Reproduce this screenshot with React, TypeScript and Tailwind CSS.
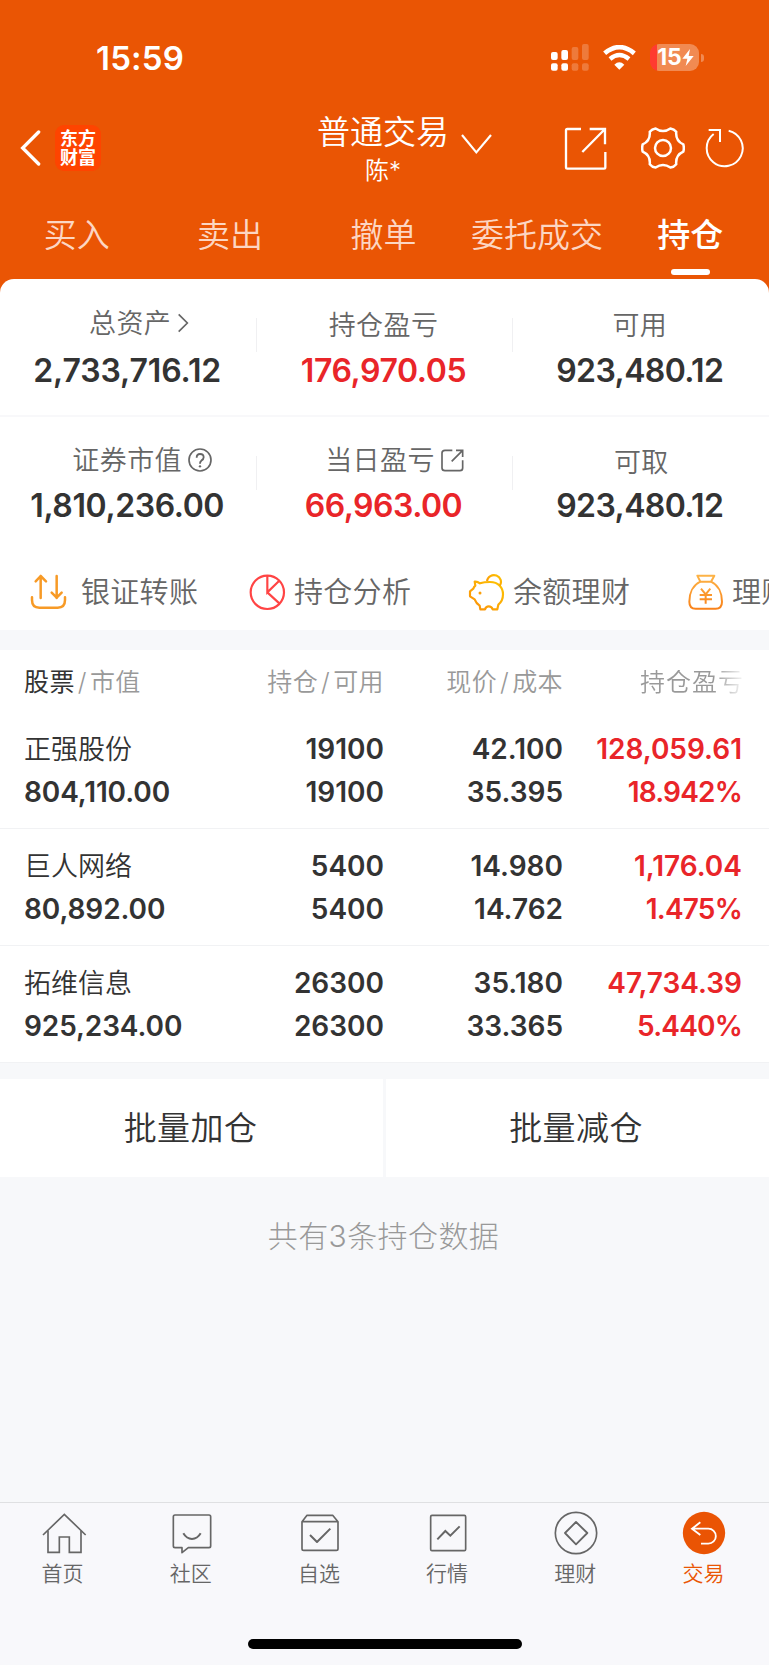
import React from "react";

interface Holding {
  name: string;
  marketValue: string;
  amount: string;
  available: string;
  price: string;
  cost: string;
  profit: string;
  profitRate: string;
}

const holdings: Holding[] = [
  {
    name: "正强股份",
    marketValue: "804,110.00",
    amount: "19100",
    available: "19100",
    price: "42.100",
    cost: "35.395",
    profit: "128,059.61",
    profitRate: "18.942%",
  },
  {
    name: "巨人网络",
    marketValue: "80,892.00",
    amount: "5400",
    available: "5400",
    price: "14.980",
    cost: "14.762",
    profit: "1,176.04",
    profitRate: "1.475%",
  },
  {
    name: "拓维信息",
    marketValue: "925,234.00",
    amount: "26300",
    available: "26300",
    price: "35.180",
    cost: "33.365",
    profit: "47,734.39",
    profitRate: "5.440%",
  },
];

const tabs = ["买入", "卖出", "撤单", "委托成交", "持仓"];

const SignalIcon = () => (
  <svg width="38" height="27" viewBox="0 0 114 81" fill="#fff">
    <rect x="0" y="24" width="20" height="24" rx="6" />
    <rect x="31" y="18" width="20" height="30" rx="6" />
    <rect x="0" y="58" width="20" height="22" rx="6" />
    <rect x="31" y="58" width="20" height="22" rx="6" />
    <g opacity="0.22">
      <rect x="62" y="9" width="20" height="39" rx="6" />
      <rect x="93" y="0" width="20" height="48" rx="6" />
      <rect x="62" y="58" width="20" height="22" rx="6" />
      <rect x="93" y="58" width="20" height="22" rx="6" />
    </g>
  </svg>
);

const WifiIcon = () => (
  <svg width="33" height="25" viewBox="0 0 99 75" fill="none" stroke="#fff">
    <path d="M5 25 Q49 -12 94 25" strokeWidth="14" />
    <path d="M21 42 Q49 18 78 42" strokeWidth="13" />
    <path d="M34 59 Q49 45 64 59 L49 74Z" fill="#fff" stroke="none" />
  </svg>
);

const BatteryIcon = () => (
  <div className="flex items-center">
    <div className="flex h-[27px] w-[49px] items-center justify-center overflow-hidden rounded-[9px] bg-[linear-gradient(90deg,#ff3b30_0_7px,#f18a52_7px)] pl-[2px]">
      <span className="text-[23px] leading-none font-bold">15</span>
      <svg width="12" height="17" viewBox="0 0 36 51" fill="#fff">
        <path d="M24 0 L1 29 H16 L11 51 L35 21 H20Z" />
      </svg>
    </div>
    <div className="ml-[2px] h-[8px] w-[3px] rounded-r-full bg-[#f18a52]" />
  </div>
);

const ShareIcon = () => (
  <svg width="43" height="43" viewBox="0 0 129 129" fill="none" stroke="#fff" strokeWidth="7">
    <path d="M51 6 H10 Q6 6 6 10 V121 Q6 125 10 125 H120 Q124 125 124 121 V75" />
    <path d="M77 6 H123 V52 M123 6 L55 75" />
  </svg>
);

const GearIcon = () => (
  <svg
    width="44"
    height="44"
    viewBox="-66 -66 132 132"
    fill="none"
    stroke="#fff"
    strokeWidth="7.5"
    strokeLinejoin="round"
  >
    <path d="M61 -11 Q64 0 61 11 C45 18 38 30 39.7 48.7 Q33 57.2 22.3 58.7 C7 48 -7 48 -22.3 58.7 Q-33 57.2 -39.7 48.7 C-38 30 -45 18 -61 11 Q-64 0 -61 -11 C-45 -18 -38 -30 -39.7 -48.7 Q-33 -57.2 -22.3 -58.7 C-7 -48 7 -48 22.3 -58.7 Q33 -57.2 39.7 -48.7 C38 -30 45 -18 61 -11Z" />
    <circle r="24" />
  </svg>
);

const RefreshIcon = () => (
  <svg width="40" height="40" viewBox="0 0 120 120" fill="none" stroke="#fff" strokeWidth="6">
    <path d="M71 8 A54 54 0 1 1 26 18" />
    <path d="M11 6 H45 V42" />
  </svg>
);

const ArrowRightIcon = () => (
  <svg width="12" height="20" viewBox="0 0 36 60" fill="none" stroke="#666" strokeWidth="5">
    <path d="M5 4 L31 30 L5 56" />
  </svg>
);

const QuestionIcon = () => (
  <svg width="24" height="24" viewBox="0 0 72 72" fill="none" stroke="#666" strokeWidth="5">
    <circle cx="36" cy="36" r="33" />
    <path d="M26 29 Q26 18 36 18 Q47 18 47 28 Q47 34 40 38 Q36 41 36 47" strokeWidth="5.5" />
    <circle cx="36" cy="55" r="3.5" fill="#666" stroke="none" />
  </svg>
);

const OpenIcon = () => (
  <svg width="23" height="23" viewBox="0 0 69 69" fill="none" stroke="#666" strokeWidth="5">
    <path d="M34 4 H12 Q3 4 3 12 V57 Q3 65 12 65 H57 Q65 65 65 57 V34" />
    <path d="M45 4 H65 V24 M65 4 L32 37" />
  </svg>
);

const TransferIcon = () => (
  <svg
    width="37"
    height="37"
    viewBox="0 0 111 111"
    fill="none"
    stroke="#f79a26"
    strokeWidth="7.5"
    strokeLinecap="round"
    strokeLinejoin="round"
  >
    <path d="M32 72 V6 M17 22 L32 6 L48 22" />
    <path d="M80 6 V72 M65 56 L80 71 L95 56" />
    <path d="M6 70 V78 Q6 101 28 101 H83 Q105 101 105 78 V70" />
  </svg>
);

const PieIcon = () => (
  <svg width="37" height="37" viewBox="0 0 111 111" fill="none" stroke="#ff4444" strokeWidth="6.5">
    <circle cx="55" cy="55" r="50" />
    <path d="M55 5 V55 L90 21 M55 55 L91 88" />
  </svg>
);

const PiggyIcon = () => (
  <svg
    width="37"
    height="37"
    viewBox="250 99 111 111"
    fill="none"
    stroke="url(#piggy)"
    strokeWidth="6.5"
    strokeLinejoin="round"
  >
    <defs>
      <linearGradient id="piggy" x1="0" y1="1" x2="1" y2="0">
        <stop offset="0" stopColor="#fb8f0a" />
        <stop offset="1" stopColor="#fdc400" />
      </linearGradient>
    </defs>
    <path d="M270 122 Q278 121 286 127 Q298 123 316 123 C342 123 355 140 355 160 Q355 180 341 191 L338 205 H324 Q321 196 312 196 Q304 196 301 205 H287 L285 194 Q275 188 270 175 L256 166 V151 L266 143 Q267 138 272 134Z" />
    <path d="M307 120 A21 20 0 1 1 345 134" />
    <circle cx="286" cy="156" r="4.5" fill="#fb9f0a" stroke="none" />
  </svg>
);

const MoneyBagIcon = () => (
  <svg
    width="37"
    height="37"
    viewBox="908 99 111 111"
    fill="none"
    stroke="url(#bag)"
    strokeWidth="6"
    strokeLinejoin="round"
  >
    <defs>
      <linearGradient id="bag" gradientUnits="userSpaceOnUse" x1="960" y1="100" x2="960" y2="206">
        <stop offset="0" stopColor="#fdb548" />
        <stop offset="1" stopColor="#f98118" />
      </linearGradient>
    </defs>
    <path d="M939 104 H990 L980 122 H948Z" />
    <path d="M948 122 C926 132 915 156 915 182 Q915 203 934 203 H994 Q1013 203 1013 182 C1013 156 1002 132 980 122" />
    <path d="M950 143 L964 160 L978 143 M964 160 V188 M946 162 H983 M946 175 H983" />
  </svg>
);

const navStroke = {
  width: 46,
  height: 44,
  fill: "none",
  stroke: "#666",
  strokeWidth: 5,
} as const;

const HomeIcon = () => (
  <svg {...navStroke} viewBox="123 94 138 132">
    <path d="M129 166 L193 104 L257 166" />
    <path d="M144 153 V218 H178 V172 H208 V218 H243 V153" />
  </svg>
);

const ChatIcon = () => (
  <svg {...navStroke} viewBox="508 94 138 132" strokeLinejoin="round">
    <path d="M526 106 H628 Q633 106 633 111 V199 Q633 204 628 204 H566 L547 219 V204 H526 Q521 204 521 199 V111 Q521 106 526 106Z" />
    <path d="M551 161 Q561 178 577 178 Q593 178 603 161" strokeWidth="6" />
  </svg>
);

const WatchIcon = () => (
  <svg {...navStroke} viewBox="891 94 138 132" strokeLinejoin="round">
    <path d="M906 126 L921 107 H998 L1014 126 V207 Q1014 212 1009 212 H911 Q906 212 906 207Z M906 126 H1014" />
    <path d="M930 166 L951 187 L991 147" strokeWidth="6" />
  </svg>
);

const MarketIcon = () => (
  <svg {...navStroke} viewBox="120 94 138 132">
    <rect x="137" y="107" width="105" height="106" rx="4" />
    <path d="M157 179 L181 154 L196 168 L224 140" strokeWidth="6" />
  </svg>
);

const WealthIcon = () => (
  <svg {...navStroke} viewBox="504 94 138 132" strokeLinejoin="round">
    <circle cx="573" cy="160" r="62" />
    <path d="M573 127 L607 160 L573 194 L540 160Z" strokeWidth="5.5" />
  </svg>
);

const TradeIcon = () => (
  <svg {...navStroke} viewBox="888 94 138 132">
    <circle cx="957" cy="160" r="63.5" fill="#ea5404" stroke="none" />
    <path
      d="M946 128 L921 147 L946 166 M921 147 H970 A22.5 22.5 0 0 1 970 192 H948"
      stroke="#fff"
      strokeWidth="5.5"
    />
  </svg>
);

const actions = [
  { label: "银证转账", icon: <TransferIcon />, gap: "gap-[14px]" },
  { label: "持仓分析", icon: <PieIcon />, gap: "gap-[8px]" },
  { label: "余额理财", icon: <PiggyIcon />, gap: "gap-[8px]" },
  { label: "理财", icon: <MoneyBagIcon />, gap: "gap-[8px]" },
];

const navItems = [
  { label: "首页", icon: <HomeIcon /> },
  { label: "社区", icon: <ChatIcon /> },
  { label: "自选", icon: <WatchIcon /> },
  { label: "行情", icon: <MarketIcon /> },
  { label: "理财", icon: <WealthIcon /> },
  { label: "交易", icon: <TradeIcon />, active: true },
];

interface SummaryCellProps {
  label: string;
  value: string;
  icon?: React.ReactNode;
  labelClass?: string;
  valueClass?: string;
}

const SummaryCell: React.FC<SummaryCellProps> = ({
  label,
  value,
  icon,
  labelClass = "",
  valueClass = "tracking-[-0.6px] text-[#333]",
}) => (
  <div className="flex flex-col items-center justify-between pr-[2px]">
    <div
      className={`flex h-[30px] items-center gap-[6px] text-[27px] leading-none font-[350] tracking-[0.4px] text-[#666] ${labelClass}`}
    >
      {label}
      {icon}
    </div>
    <div className={`text-[32px] leading-[32px] font-semibold ${valueClass}`}>{value}</div>
  </div>
);

const Separators = () => (
  <>
    <div className="absolute top-[39px] left-[256px] h-[34px] w-px bg-[#f0f0f2]" />
    <div className="absolute top-[39px] left-[512px] h-[34px] w-px bg-[#f0f0f2]" />
  </>
);

const HoldingRow: React.FC<{ item: Holding }> = ({ item }) => (
  <div className="grid h-[117px] grid-cols-[199px_161px_179px_179px] content-start gap-y-[15px] border-b border-[#f1f2f4] pt-[23px] pl-6 text-right text-[28px] leading-[28px] font-semibold text-[#333]">
    <span className="pt-px text-left text-[27px] leading-[27px] font-[350]">{item.name}</span>
    <span>{item.amount}</span>
    <span>{item.price}</span>
    <span className="text-[#e92529]">{item.profit}</span>
    <span className="text-left tracking-[-0.1px]">{item.marketValue}</span>
    <span>{item.available}</span>
    <span>{item.cost}</span>
    <span className="tracking-[-0.8px] text-[#e92529]">{item.profitRate}</span>
  </div>
);

const App: React.FC = () => {
  return (
    <div className="flex h-[1665px] w-[769px] flex-col overflow-hidden bg-[#f7f8fa] font-['Inter','Noto_Sans_CJK_SC',sans-serif] text-[#333]">
      <header className="h-[293px] shrink-0 bg-[#ea5504] text-white">
        <div className="flex h-[115px] items-center pr-[65px] pl-[96px]">
          <span className="pt-px text-[33px] leading-none font-semibold tracking-[0.2px]">15:59</span>
          <div className="ml-auto flex items-center gap-[14px]">
            <SignalIcon />
            <WifiIcon />
            <BatteryIcon />
          </div>
        </div>

        <div className="flex h-[66px] items-center pr-[24px] pl-[20px]">
          <svg width="21" height="36" viewBox="0 0 63 108" fill="none" stroke="#fff" strokeWidth="10">
            <path d="M56 6 L8 54 L56 102" strokeLinecap="round" />
          </svg>
          <div className="ml-[14px] flex h-[46px] w-[46px] flex-col items-center justify-center rounded-[9px] bg-[#fe4400] text-[18px] leading-[19px] font-bold">
            <span>东方</span>
            <span>财富</span>
          </div>
          <div className="ml-[216px] flex w-[132px] flex-col items-center pt-[2px]">
            <span className="text-[33px] leading-[34px] font-[350] whitespace-nowrap">普通交易</span>
            <span className="mt-[9px] text-[24px] leading-[26px] font-[350]">陈*</span>
          </div>
          <svg className="mt-[-8px] ml-[12px]" width="31" height="22" viewBox="0 0 93 66" fill="none" stroke="#fff" strokeWidth="6.5">
            <path d="M3 6 L46 58 L90 6" />
          </svg>
          <div className="ml-auto flex items-center">
            <ShareIcon />
            <div className="ml-[34px]">
              <GearIcon />
            </div>
            <div className="ml-[20px]">
              <RefreshIcon />
            </div>
          </div>
        </div>

        <div className="grid h-[98px] grid-cols-5 pr-[2px]">
          {tabs.map((tab) => {
            const active = tab === "持仓";
            return (
              <div key={tab} className="flex flex-col items-center pt-[35px]">
                <span
                  className={`text-[33px] leading-[38px] whitespace-nowrap ${
                    active ? "font-medium" : "font-[350] text-[#fcd6c3]"
                  }`}
                >
                  {tab}
                </span>
                {active && <span className="mt-[15px] h-[6px] w-[39px] rounded-full bg-white" />}
              </div>
            );
          })}
        </div>
      </header>

      <section className="z-10 mt-[-14px] h-[351px] shrink-0 rounded-t-[14px] bg-white">
        <div className="relative grid h-[138px] grid-cols-3 border-b-2 border-[#f8f8fa] pt-[31px] pb-[28px]">
          <Separators />
          <SummaryCell
            label="总资产"
            value="2,733,716.12"
            icon={<ArrowRightIcon />}
            labelClass="mt-[-2px] pl-[24px]"
            valueClass="tracking-[-0.1px] text-[#333]"
          />
          <SummaryCell label="持仓盈亏" value="176,970.05" valueClass="tracking-[-0.4px] text-[#e92529]" />
          <SummaryCell label="可用" value="923,480.12" />
        </div>
        <div className="relative grid h-[122px] grid-cols-3 pt-[30px] pb-[17px]">
          <Separators />
          <SummaryCell
            label="证券市值"
            value="1,810,236.00"
            icon={<QuestionIcon />}
            labelClass="mt-[-2px] pl-[30px]"
            valueClass="tracking-[-0.4px] text-[#333]"
          />
          <SummaryCell
            label="当日盈亏"
            value="66,963.00"
            icon={<OpenIcon />}
            labelClass="mt-[-2px] pl-[22px]"
            valueClass="tracking-[-0.5px] text-[#e92529]"
          />
          <SummaryCell label="可取" value="923,480.12" labelClass="pl-[3px]" />
        </div>
        <div className="flex h-[91px] items-center overflow-hidden pt-[15px] pl-[30px] whitespace-nowrap">
          {actions.map((action) => (
            <div
              key={action.label}
              className={`flex w-[219px] shrink-0 items-center text-[29px] leading-none font-[350] tracking-[0.3px] text-[#666] ${action.gap}`}
            >
              {action.icon}
              {action.label}
            </div>
          ))}
        </div>
      </section>

      <section className="mt-[20px] shrink-0 bg-white">
        <div className="grid h-[62px] grid-cols-[199px_161px_179px_183px] items-center pt-[2px] pl-6 text-right text-[25px] leading-none font-[350] tracking-[0.4px] text-[#999]">
          <span className="text-left">
            <span className="font-normal text-[#333]">股票</span>
            <span className="px-[3px]">/</span>市值
          </span>
          <span>
            持仓<span className="px-[3px]">/</span>可用
          </span>
          <span>
            现价<span className="px-[3px]">/</span>成本
          </span>
          <span className="justify-self-end bg-[linear-gradient(90deg,#999_70%,transparent)] bg-clip-text pr-[2px] tracking-[1px] text-transparent">
            持仓盈亏
          </span>
        </div>
        {holdings.map((item) => (
          <HoldingRow key={item.name} item={item} />
        ))}
      </section>

      <div className="mt-[16px] flex h-[98px] shrink-0 gap-[3px] text-[33px] leading-none tracking-[0.4px]">
        <button type="button" className="w-[383px] bg-white pt-px pr-[2px] font-[350]">
          批量加仓
        </button>
        <button type="button" className="w-[383px] bg-white pt-px pr-[3px] font-[350]">
          批量减仓
        </button>
      </div>

      <p className="mt-[40px] pr-[2px] text-center text-[30px] leading-[38px] font-light tracking-[0.4px] text-[#999]">
        共有3条持仓数据
      </p>

      <nav className="mt-auto h-[163px] shrink-0 border-t border-[#dfe0e2] bg-[#f8f8fb]">
        <div className="grid h-[136px] grid-cols-6 pt-[8px]">
          {navItems.map((item) => (
            <div
              key={item.label}
              className={`flex flex-col items-center gap-[7px] pr-px text-[21px] leading-[24px] font-[350] ${
                item.active ? "text-[#ea5504]" : "text-[#666]"
              }`}
            >
              {item.icon}
              <span className="mr-[2px]">{item.label}</span>
            </div>
          ))}
        </div>
        <div className="mx-auto h-[10px] w-[274px] rounded-full bg-black" />
      </nav>
    </div>
  );
};

export default App;
